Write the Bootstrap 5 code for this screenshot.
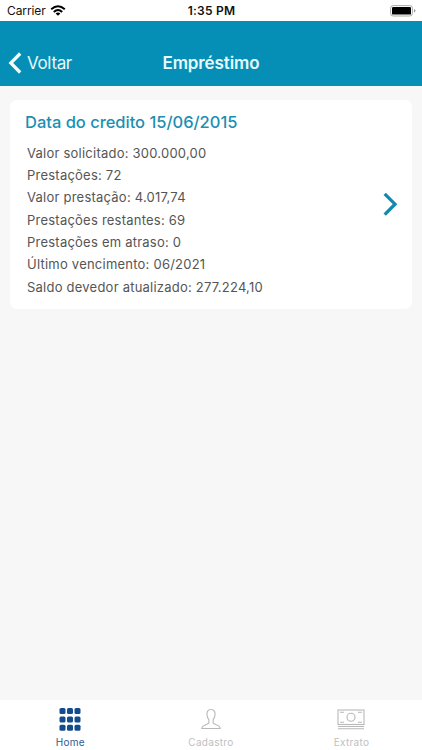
<!DOCTYPE html>
<html lang="pt-BR">
<head>
<meta charset="utf-8">
<meta name="viewport" content="width=device-width, initial-scale=1">
<title>Empréstimo</title>
<link href="https://cdn.jsdelivr.net/npm/bootstrap@5.3.0/dist/css/bootstrap.min.css" rel="stylesheet">
<style>
body{font-family:Inter,"Liberation Sans",sans-serif;background:#f7f7f7;height:750px;overflow:hidden}
svg{display:block;flex:none}
.status{height:21px;font-size:12px;line-height:21px;color:#111;padding:0 6px 0 7px}
.status>*{flex:1 1 0}
.carrier{letter-spacing:-.1px}
.clock{font-weight:600;letter-spacing:.25px}
.topbar{height:65px;background:#068fb6;color:#e6fafd;padding:20px 8px 0;line-height:44px}
.topbar>*{flex:1 1 0}
.back{font-size:17px;letter-spacing:-.35px;color:inherit;height:43px}
.screen-title{font-size:17px;font-weight:600;letter-spacing:-.1px}
.loan{margin:14px 10px 0;height:209px;border-radius:7px;padding:11px 14px 0 15px}
.loan-title{font-size:16.5px;line-height:22px;font-weight:500;letter-spacing:-.02px;color:#1c8fb2}
.loan-list{font-size:13px;line-height:22.35px;letter-spacing:.23px;color:#555;margin-top:8.5px;padding-left:2px}
.loan-list span{display:block}
.go{margin-bottom:12px}
.tabs{height:50px;padding-top:8px}
.tab{width:140.6px;font-size:10px;line-height:12px;letter-spacing:.3px;color:#c0c0c0}
.tab.on{color:#2c5b95}
.tab svg{margin-bottom:5px}
</style>
</head>
<body class="d-flex flex-column">
<div class="status bg-white d-flex align-items-center">
  <div class="d-flex align-items-center"><span class="carrier">Carrier</span>
    <svg class="ms-1" width="16" height="11" viewBox="0 0 16 11"><g fill="none" stroke="#000" stroke-width="2"><path d="M1.2 4.3Q8-1.7 14.8 4.3"/><path d="M3.8 6.9Q8 3.1 12.2 6.9"/></g><path d="M5.6 8.4Q8 6.6 10.4 8.4L8 10.8Z"/></svg>
  </div>
  <div class="clock text-center">1:35 PM</div>
  <div class="d-flex justify-content-end"><svg width="27" height="12" viewBox="0 0 27 12"><rect x="1.6" y=".6" width="21.800" height="10.400" rx="2.6" fill="#fff" stroke="#aaa"/><rect x="3" y="2" width="19" height="7.600" rx="1.2"/><path d="M25 4v3.600q1.5-.6 1.500-1.800T25 4" fill="#999"/></svg></div>
</div>
<header class="topbar d-flex">
  <a href="#" class="back d-flex align-items-center text-decoration-none"><svg width="15" height="22" viewBox="0 0 15 22"><path d="M12.2 1.5 2.8 11l9.4 9.500" fill="none" stroke="#f2feff" stroke-width="3.2"/></svg><span class="ms-1">Voltar</span></a>
  <div class="screen-title text-center">Empréstimo</div>
  <div></div>
</header>
<main class="flex-grow-1">
  <section class="loan bg-white d-flex justify-content-between">
    <div>
      <div class="loan-title">Data do credito 15/06/2015</div>
      <div class="loan-list">
        <span>Valor solicitado: 300.000,00</span>
        <span>Prestações: 72</span>
        <span>Valor prestação: 4.017,74</span>
        <span>Prestações restantes: 69</span>
        <span>Prestações em atraso: 0</span>
        <span>Último vencimento: 06/2021</span>
        <span>Saldo devedor atualizado: 277.224,10</span>
      </div>
    </div>
    <svg class="go align-self-center" width="16" height="24" viewBox="0 0 16 24"><path d="M2.7 1.800 13 12.200 2.700 22.600" fill="none" stroke="#1389b1" stroke-width="3.300"/></svg>
  </section>
</main>
<nav class="tabs bg-white d-flex">
  <div class="tab on d-flex flex-column align-items-center">
    <svg width="22" height="23" viewBox="0 0 22 23" fill="#134c8d"><rect x=".5" width="6" height="6" rx="1.5"/><rect x="8" width="6" height="6" rx="1.5"/><rect x="15.5" width="6" height="6" rx="1.5"/><rect x=".5" y="8.4" width="6" height="6" rx="1.5"/><rect x="8" y="8.4" width="6" height="6" rx="1.5"/><rect x="15.5" y="8.4" width="6" height="6" rx="1.5"/><rect x=".5" y="16.800" width="6" height="6" rx="1.5"/><rect x="8" y="16.800" width="6" height="6" rx="1.5"/><rect x="15.5" y="16.800" width="6" height="6" rx="1.5"/></svg>
    Home</div>
  <div class="tab d-flex flex-column align-items-center">
    <svg width="20" height="23" viewBox="0 0 20 23" fill="none" stroke="#b8b8b8" stroke-width="1.1"><path d="M10 1.500C6.700 1.500 5.700 4 6 7c.1 2 .8 3.400 1.900 4.600v3.200C7.500 16.800 1 16.300.8 20.500h18.400C19 16.300 12.500 16.800 12.100 14.800v-3.200C13.200 10.400 13.900 9 14 7c.3-3-.7-5.500-4-5.500Z"/></svg>
    Cadastro</div>
  <div class="tab d-flex flex-column align-items-center">
    <svg width="28" height="23" viewBox="0 0 28 23" fill="none" stroke="#b8b8b8" stroke-width="1.100"><rect x="1" y="2" width="26" height="14.500"/><circle cx="14" cy="9.300" r="4"/><path d="M3 4.300h4M21 4.300h4M3 14.200h4M21 14.200h4M1 18.500h26M1 20.700h26"/></svg>
    Extrato</div>
</nav>
<script src="https://cdn.jsdelivr.net/npm/bootstrap@5.3.0/dist/js/bootstrap.bundle.min.js"></script>
</body>
</html>
